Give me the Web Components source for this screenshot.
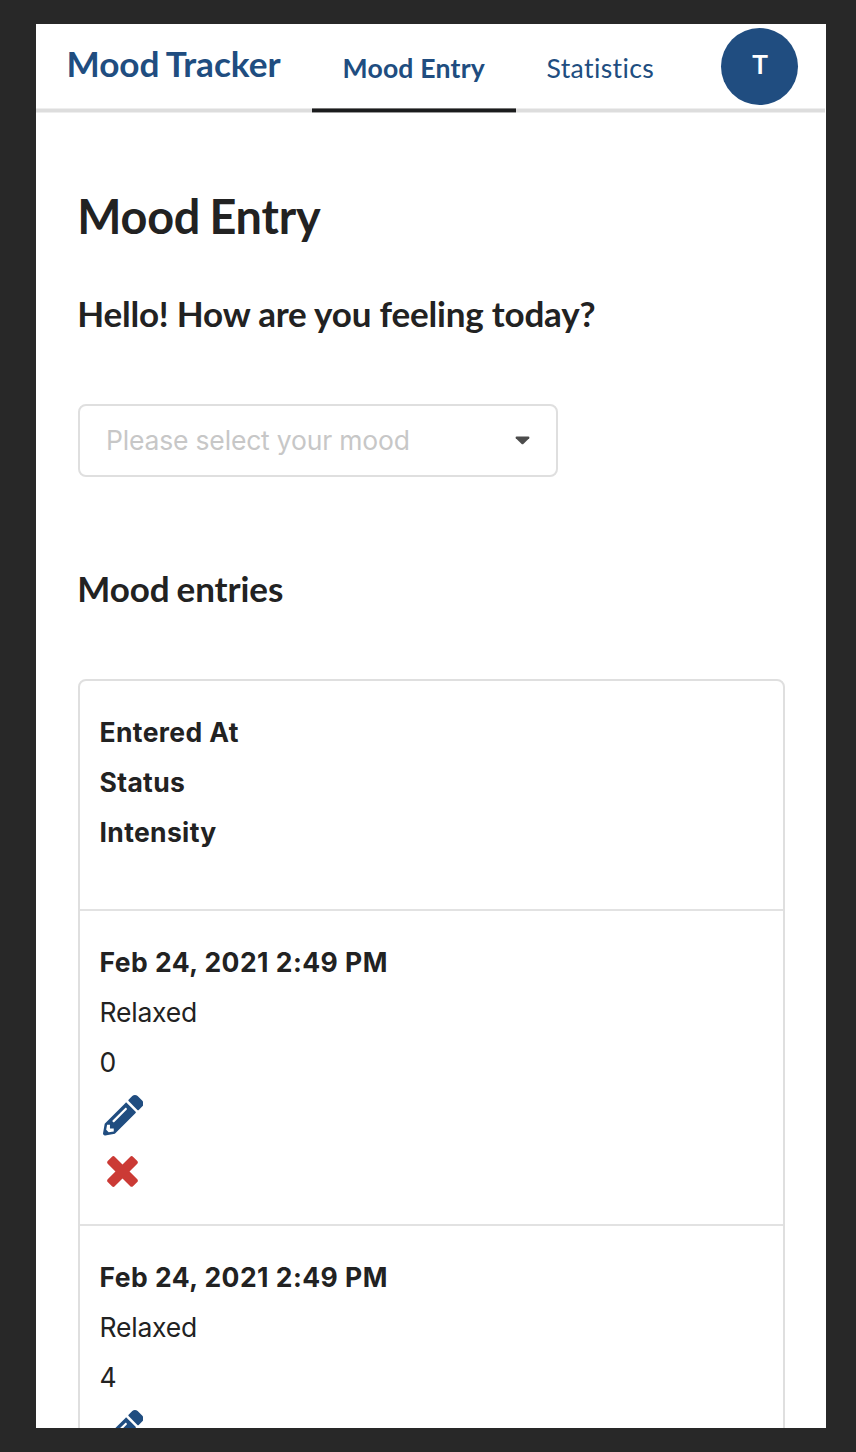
<!DOCTYPE html>
<html lang="en"><head><meta charset="utf-8"><title>Mood Tracker</title>
<style>
html,body{margin:0;height:100%}
body{background:#282828;font-family:Inter,"Liberation Sans",sans-serif;color:#222;font-variant-ligatures:none}
</style></head><body>
<mood-app></mood-app>
<script>
const define=(name,html)=>customElements.define(name,class extends HTMLElement{
  constructor(){super();this.attachShadow({mode:'open'}).innerHTML=html;}
});
define('nav-tab',`<style>
:host{display:block;box-sizing:border-box;height:89px;padding:27px 0 0 30.5px;font:400 26.6px/34px Lato,sans-serif;font-variant-ligatures:none;letter-spacing:.38px;color:#204d80;white-space:nowrap;
background:linear-gradient(#eee 1px,#ddd 1px,#ddd 4px,#eee 4px) bottom/100% 5px no-repeat}
:host([active]){font-weight:700;letter-spacing:.2px;background:linear-gradient(#777 1px,#1b1c1d 1px,#1b1c1d 4px,#999 4px) bottom/100% 5px no-repeat}
:host([brand]){font-weight:700;font-size:35.2px;line-height:40px;padding-top:19px;letter-spacing:-.06px;word-spacing:-1px}
</style><slot></slot>`);
define('user-avatar',`<style>
:host{display:block;box-sizing:border-box;width:77px;height:77px;padding-left:1px;border-radius:50%;background:#204d80;color:#fff;font:600 26px/74px Inter,sans-serif;text-align:center}
</style><slot></slot>`);
define('app-nav',`<style>
:host{display:grid;grid-template-columns:276px 204px 1fr 104px;height:89px;margin-right:1px}
.user{background:linear-gradient(#eee 1px,#ddd 1px,#ddd 4px,#eee 4px) bottom/100% 5px no-repeat;padding-top:4px}
</style><nav-tab brand>Mood Tracker</nav-tab><nav-tab active>Mood Entry</nav-tab><nav-tab>Statistics</nav-tab><div class="user"><user-avatar>T</user-avatar></div>`);
define('mood-select',`<style>
:host{display:flex;align-items:center;justify-content:space-between;box-sizing:border-box;width:480px;height:73px;border:2px solid #dfdfdf;border-radius:8px;padding:0 26px;color:#c7c7c7;font-size:26.5px;line-height:40px;letter-spacing:-.18px}
span{margin-bottom:1px}
svg{display:block;width:15px;height:9px;margin-bottom:1px}
</style><span><slot></slot></span><svg viewBox="0 0 15 9"><path d="M1.5.5h12q1.5.3.7 1.7L8.6 7.8q-1.1 1-2.2 0L.8 2.2Q0 .8 1.5.5z" fill="#4c4c4c"/></svg>`);
define('edit-icon',`<style>:host{display:block;width:41px;height:41px}svg{display:block}</style>
<svg width="40.5" height="40.5" viewBox="0 0 512 512" fill="#204d80"><path d="M497.9 142.1l-46.1 46.1c-4.7 4.7-12.3 4.7-17 0l-111-111c-4.7-4.7-4.7-12.3 0-17l46.1-46.1c18.7-18.7 49.1-18.7 67.9 0l60.1 60.1c18.8 18.7 18.8 49.1 0 67.9zM284.2 99.8L21.6 362.4.4 483.9c-2.9 16.4 11.4 30.6 27.8 27.8l121.5-21.3 262.6-262.6c4.7-4.7 4.7-12.3 0-17l-111-111c-4.8-4.7-12.4-4.7-17.1 0zM124.1 339.9c-5.5-5.5-5.5-14.3 0-19.8l154-154c5.5-5.5 14.3-5.5 19.8 0s5.5 14.3 0 19.8l-154 154c-5.5 5.5-14.3 5.5-19.8 0zM88 424h48v36.3l-64.5 11.3-31.1-31.1L51.7 376H88v48z"/></svg>`);
define('remove-icon',`<style>:host{display:block;width:31px;height:41px}svg{display:block}</style>
<svg width="31" height="41" viewBox="0 0 384 512" fill="#cb3a35"><path d="M323.1 441l53.9-53.9c9.4-9.4 9.4-24.5 0-33.9L279.8 256l97.2-97.2c9.4-9.4 9.4-24.5 0-33.9L323.1 71c-9.4-9.4-24.5-9.4-33.9 0L192 168.2 94.8 71c-9.4-9.4-24.5-9.4-33.9 0L7 124.9c-9.4 9.4-9.4 24.5 0 33.9l97.2 97.2L7 353.2c-9.4 9.4-9.4 24.5 0 33.9L60.9 441c9.4 9.4 24.5 9.4 33.9 0l97.2-97.2 97.2 97.2c9.3 9.3 24.5 9.3 33.9 0z"/></svg>`);
define('entry-row',`<style>
:host{display:block;box-sizing:border-box;height:315px;padding:26px 20px 0 19.5px;border-bottom:2px solid #e2e2e2;font-size:26.5px;line-height:50px;letter-spacing:-.2px}
:host([head]){height:230px;font-weight:700;letter-spacing:.35px}
slot{display:block}
slot[name=date]{font-weight:700;letter-spacing:.47px}
:host([head]) slot[name=date]{letter-spacing:.37px}
.actions{display:grid;gap:14.5px;padding:8px 0 0 3px}
:host([head]) .actions{display:none}
remove-icon{margin-left:4.5px}
</style><slot name="date"></slot><slot name="status"></slot><slot name="level"></slot><div class="actions"><edit-icon></edit-icon><remove-icon></remove-icon></div>`);
define('entry-table',`<style>:host{display:block;box-sizing:border-box;width:707px;border:2px solid #dfdfdf;border-radius:8px}</style>
<entry-row head><span slot="date">Entered At</span><span slot="status">Status</span><span slot="level">Intensity</span></entry-row>
<entry-row><span slot="date">Feb 24, 2021 2:49 PM</span><span slot="status">Relaxed</span><span slot="level">0</span></entry-row>
<entry-row><span slot="date">Feb 24, 2021 2:49 PM</span><span slot="status">Relaxed</span><span slot="level">4</span></entry-row>`);
define('mood-app',`<style>
:host{display:block;box-sizing:border-box;height:1452px;padding:24px 30px 24px 36px;overflow:hidden}
.page{height:1404px;background:#fff;overflow:hidden}
main{padding:73px 0 0 42px}
h1,h2{font-family:Lato,sans-serif;font-weight:700;margin:0 0 0 -.8px;white-space:nowrap}
h1{font-size:46.8px;line-height:60px;letter-spacing:-.2px;word-spacing:-2px}
h2{font-size:35px;line-height:44px;letter-spacing:-.19px}
h2.q{margin-top:45px;margin-bottom:69px}
h2.e{margin-top:89px;margin-bottom:69px;word-spacing:-1.5px;letter-spacing:-.06px}
</style><div class="page"><app-nav></app-nav><main><h1>Mood Entry</h1><h2 class="q">Hello! How are you feeling today?</h2><mood-select>Please select your mood</mood-select><h2 class="e">Mood entries</h2><entry-table></entry-table></main></div>`);
</script></body></html>
